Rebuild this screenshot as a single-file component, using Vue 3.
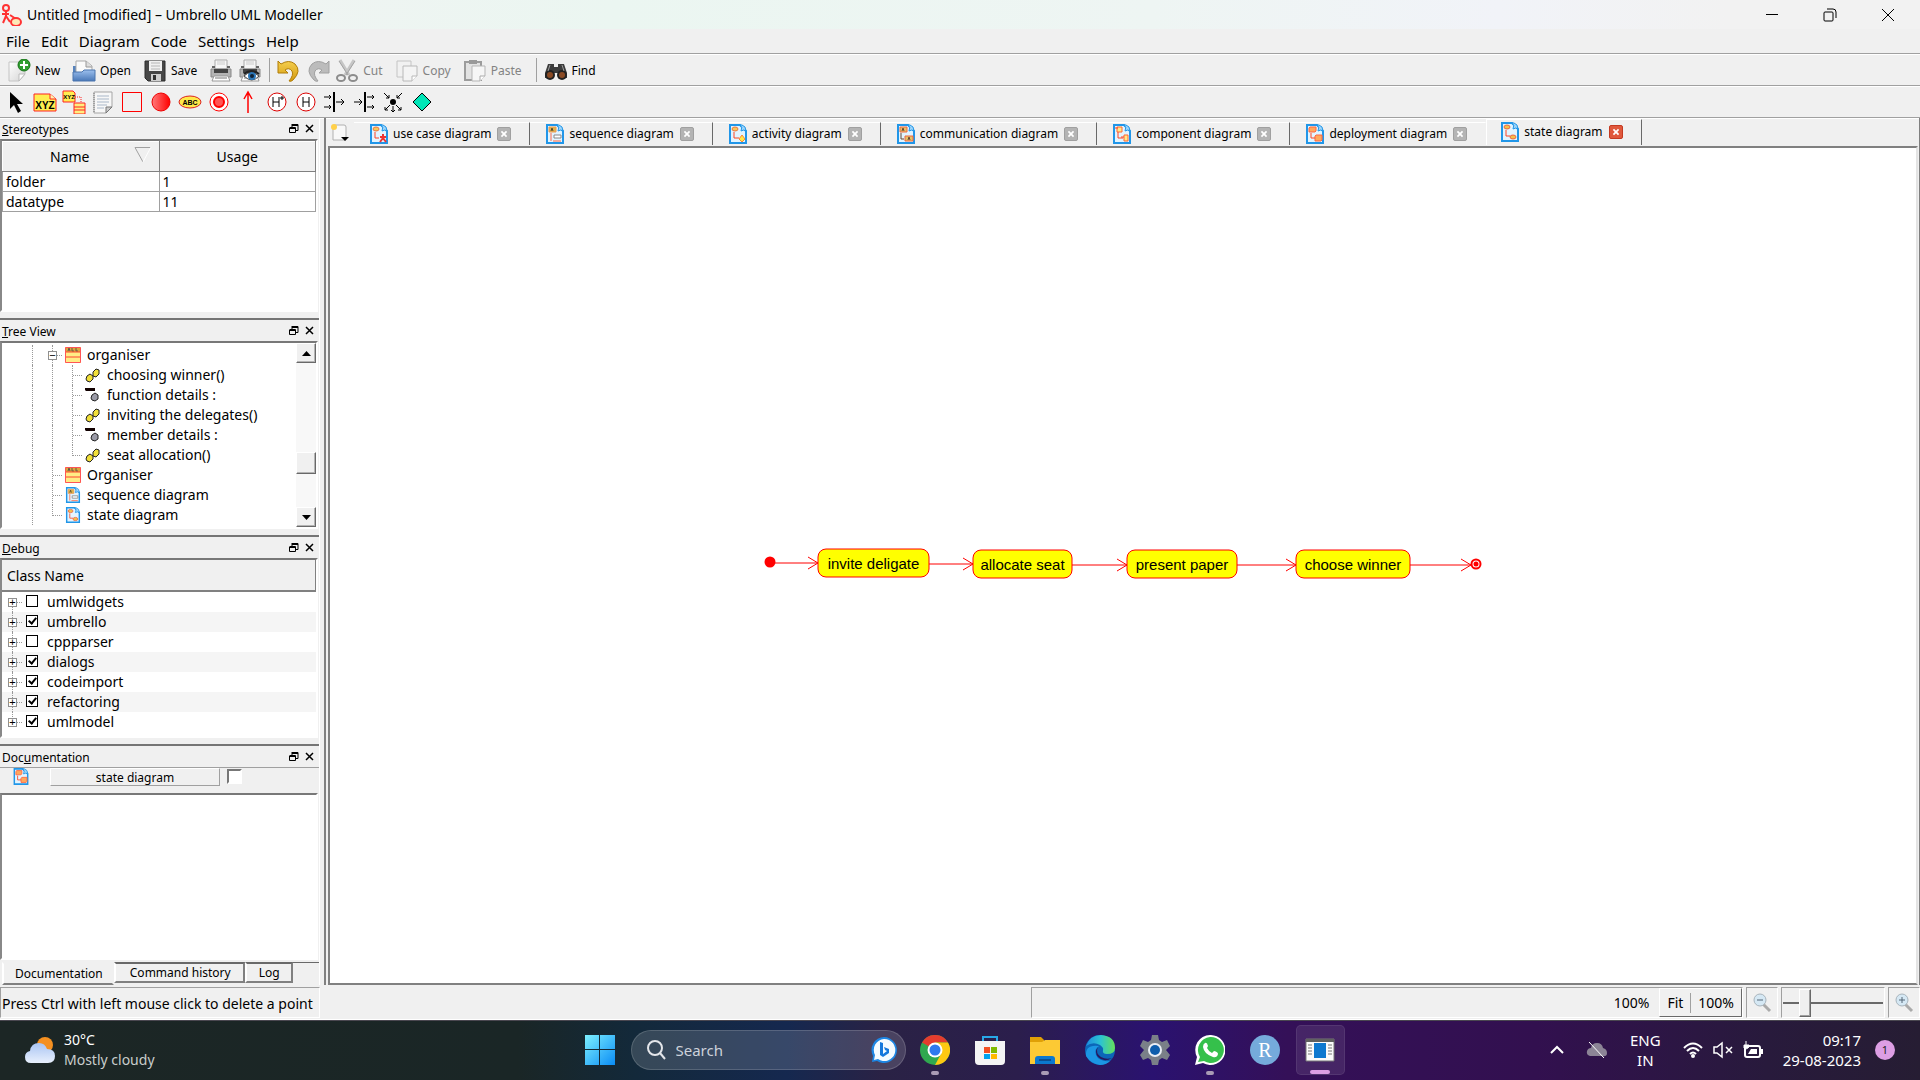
<script setup>
import { ref } from 'vue'

const menus = ['File', 'Edit', 'Diagram', 'Code', 'Settings', 'Help']

const actions = [
  { icon: 'new', label: 'New' },
  { icon: 'open', label: 'Open' },
  { icon: 'save', label: 'Save' },
  { icon: 'print', title: 'Print' },
  { icon: 'preview', title: 'Print preview' },
  { sep: true },
  { icon: 'undo', title: 'Undo' },
  { icon: 'redo', title: 'Redo', off: true },
  { icon: 'cut', label: 'Cut', off: true },
  { icon: 'copy', label: 'Copy', off: true },
  { icon: 'paste', label: 'Paste', off: true },
  { sep: true },
  { icon: 'find', label: 'Find' },
]

const tools = [
  { icon: 'select' },
  { icon: 'object', text: 'XYZ', x: 12, y: 19, size: 10 },
  { icon: 'objectnode', text: 'XYZ', x: 7, y: 9, size: 6 },
  { icon: 'note' },
  { icon: 'box' },
  { icon: 'initial' },
  { icon: 'state', text: 'ABC', x: 12, y: 15, size: 7 },
  { icon: 'final' },
  { icon: 'transition' },
  { icon: 'deephistory' },
  { icon: 'history' },
  { icon: 'join' },
  { icon: 'fork' },
  { icon: 'junction' },
  { icon: 'choice' },
]

const stereotypes = [
  { name: 'folder', usage: 1 },
  { name: 'datatype', usage: 11 },
]

const tree = [
  { level: 1, icon: 'class', text: 'organiser', open: true },
  { level: 2, icon: 'operation', text: 'choosing winner()' },
  { level: 2, icon: 'attribute', text: 'function details :' },
  { level: 2, icon: 'operation', text: 'inviting the delegates()' },
  { level: 2, icon: 'attribute', text: 'member details :' },
  { level: 2, icon: 'operation', text: 'seat allocation()', last: true },
  { level: 1, icon: 'class', text: 'Organiser' },
  { level: 1, icon: 'd-sequence', text: 'sequence diagram' },
  { level: 1, icon: 'd-state', text: 'state diagram', last: true },
]

const debugClasses = ref([
  { name: 'umlwidgets', on: false },
  { name: 'umbrello', on: true },
  { name: 'cppparser', on: false },
  { name: 'dialogs', on: true },
  { name: 'codeimport', on: true },
  { name: 'refactoring', on: true },
  { name: 'umlmodel', on: true },
])

const diagrams = [
  { icon: 'd-usecase', text: 'use case diagram' },
  { icon: 'd-sequence', text: 'sequence diagram' },
  { icon: 'd-activity', text: 'activity diagram' },
  { icon: 'd-communication', text: 'communication diagram' },
  { icon: 'd-component', text: 'component diagram' },
  { icon: 'd-deployment', text: 'deployment diagram' },
  { icon: 'd-state', text: 'state diagram' },
]
const current = ref(6)

const states = [
  { x: 488, y: 401, w: 111, text: 'invite deligate' },
  { x: 643, y: 402, w: 99, text: 'allocate seat' },
  { x: 797, y: 402, w: 110, text: 'present paper' },
  { x: 966, y: 402, w: 114, text: 'choose winner' },
]
const links = [
  { x1: 445, x2: 488, y: 415 },
  { x1: 599, x2: 643, y: 416 },
  { x1: 742, x2: 797, y: 417 },
  { x1: 907, x2: 966, y: 417 },
  { x1: 1080, x2: 1141, y: 417 },
]

const apps = [
  { icon: 'chrome', title: 'Chrome', running: true },
  { icon: 'store', title: 'Store' },
  { icon: 'explorer', title: 'File Explorer', running: true },
  { icon: 'edge', title: 'Edge' },
  { icon: 'settings', title: 'Settings' },
  { icon: 'whatsapp', title: 'WhatsApp', running: true },
  { icon: 'rstudio', title: 'R', text: 'R' },
  { icon: 'umbrello', title: 'Umbrello', active: true },
]
const zoom = ref(18)
</script>

<template>
  <svg class="defs" aria-hidden="true">
    <defs>
      <linearGradient id="g-page" x1="0" y1="0" x2="1" y2="1"><stop offset="0" stop-color="#fff" /><stop offset="1" stop-color="#d4d4d4" /></linearGradient>
      <linearGradient id="g-blue" x1="0" y1="0" x2="0" y2="1"><stop offset="0" stop-color="#9cc0ee" /><stop offset="1" stop-color="#4a78b8" /></linearGradient>
      <linearGradient id="g-gold" x1="0" y1="0" x2="0" y2="1"><stop offset="0" stop-color="#f5cf4e" /><stop offset="1" stop-color="#d39a10" /></linearGradient>
      <linearGradient id="g-win" x1="0" y1="0" x2="1" y2="1"><stop offset="0" stop-color="#7df0ff" /><stop offset="1" stop-color="#0a8cf5" /></linearGradient>
      <linearGradient id="g-edge" x1="0" y1="0" x2="1" y2="0"><stop offset="0" stop-color="#1f8ce0" /><stop offset=".5" stop-color="#2cc3d2" /><stop offset="1" stop-color="#66e05a" /></linearGradient>
      <linearGradient id="g-cloud" x1="0" y1="0" x2="0" y2="1"><stop offset="0" stop-color="#a9c4f2" /><stop offset="1" stop-color="#e8f0fd" /></linearGradient>
      <linearGradient id="g-red" x1="0" y1="0" x2="1" y2="0"><stop offset="0" stop-color="#ff7a7a" /><stop offset="1" stop-color="#f00" /></linearGradient>
    </defs>

    <symbol id="i-logo" viewBox="0 0 20 22">
      <g fill="none" stroke="#f33" stroke-width="2"><circle cx="4" cy="4" r="3" /><path d="M4 7v6M0 10h7M4 12l-3 7M4 12l4 6M8 11l6 4" /><ellipse cx="14" cy="18" rx="5" ry="4" fill="#fde9b8" /></g>
    </symbol>
    <symbol id="i-new" viewBox="0 0 24 24">
      <path d="M2 3h16v12l-6 7H2z" fill="url(#g-page)" stroke="#c4c4c4" /><path d="M18 15h-6v7z" fill="#fff" stroke="#bbb" />
      <circle cx="17" cy="6" r="6" fill="#2f9e2f" stroke="#167216" /><path d="M17 2v8M13 6h8" stroke="#fff" stroke-width="2" />
    </symbol>
    <symbol id="i-open" viewBox="0 0 24 24">
      <path d="M1 7h5v10H1z" fill="#5783bd" /><path d="M4 2h10l6 5v10H4z" fill="#fafafa" stroke="#a9a9a9" /><path d="M14 2v6h6" fill="#ddd" stroke="#999" />
      <path d="M1 13h9l2-2h11v11H1z" fill="url(#g-blue)" stroke="#4a74ad" />
    </symbol>
    <symbol id="i-save" viewBox="0 0 24 24">
      <path d="M2 2h20v20H5l-3-3z" fill="#474747" stroke="#2c2c2c" /><path d="M6 2h13v10H6z" fill="#f0f0f0" /><path d="M8 4h9M8 7h9M8 10h9" stroke="#b6b6b6" /><path d="M8 15h10v7H8z" fill="#d0d0d0" /><path d="M10 16h3v5h-3z" fill="#333" />
    </symbol>
    <symbol id="i-print" viewBox="0 0 24 24">
      <path d="M6 1h12v9H6z" fill="#f6f6f6" stroke="#aaa" /><path d="M8 3h8M8 5h8" stroke="#ccc" /><path d="M2 10h20v8H2z" fill="#b4b4b4" stroke="#888" /><path d="M5 10h14v4H5z" fill="#444" /><path d="M5 17h14l2 5H3z" fill="#fff" stroke="#999" /><path d="M3 8h3M18 8h3" stroke="#666" stroke-width="2" /><path d="M6 19h12" stroke="#777" />
    </symbol>
    <symbol id="i-preview" viewBox="0 0 24 24">
      <use href="#i-print" /><path d="M6 17q7-7 15 0-7 8-15 0z" fill="#fff" stroke="#444" /><circle cx="14" cy="17" r="4" fill="#2a76b8" /><circle cx="14" cy="17" r="2" fill="#123" /><path d="M6 15q7-6 15 0" fill="none" stroke="#222" stroke-width="2" />
    </symbol>
    <symbol id="i-undo" viewBox="0 0 24 24">
      <path d="M1 2l3 3q8-5 14 0 7 7-2 16-2 2-4 1 5-6 3-10-3-4-7-1l3 3H1z" fill="url(#g-gold)" stroke="#b07c08" />
    </symbol>
    <symbol id="i-redo" viewBox="0 0 24 24">
      <path d="M23 2l-3 3q-8-5-14 0-7 7 2 16 2 2 4 1-5-6-3-10 3-4 7-1l-3 3h10z" fill="#bcbcbc" stroke="#a0a0a0" />
    </symbol>
    <symbol id="i-cut" viewBox="0 0 24 24">
      <path d="M5 1l9 15M19 1l-9 15" stroke="#c6c6c6" stroke-width="3" /><path d="M4 2l9 14M20 2l-9 14" stroke="#a2a2a2" /><g fill="none" stroke="#8c8c8c" stroke-width="2"><ellipse cx="6" cy="19" rx="4" ry="3" /><ellipse cx="18" cy="19" rx="4" ry="3" /></g>
    </symbol>
    <symbol id="i-copy" viewBox="0 0 24 24">
      <path d="M2 2h14v16H2z" fill="#f1f1f1" stroke="#c4c4c4" /><path d="M8 7h14v10l-5 5H8z" fill="#f4f4f4" stroke="#b8b8b8" /><path d="M22 17h-5v5" fill="#fff" stroke="#b8b8b8" />
    </symbol>
    <symbol id="i-paste" viewBox="0 0 24 24">
      <path d="M2 3h16v18H2z" fill="#e2e2e2" stroke="#9c9c9c" stroke-width="2" /><path d="M6 1h8v4H6z" fill="#999" /><path d="M9 7h13v10l-5 5H9z" fill="#f6f6f6" stroke="#b5b5b5" /><path d="M22 17h-5v5" fill="#fff" stroke="#aaa" />
    </symbol>
    <symbol id="i-find" viewBox="0 0 24 24">
      <path d="M4 5h6v3h4V5h6l3 9v5h-9v-5h-4v5H1v-5z" fill="#3c3c3c" /><circle cx="6" cy="16" r="5" fill="#222" /><circle cx="18" cy="16" r="5" fill="#222" /><circle cx="6" cy="16" r="3" fill="#8a4a24" /><circle cx="18" cy="16" r="3" fill="#8a4a24" /><path d="M6 6l-2 6M18 6l2 6" stroke="#999" />
    </symbol>

    <symbol id="i-select" viewBox="0 0 24 24"><path d="M6 2v17l4-4 4 8 3-2-4-7h6z" fill="#000" /></symbol>
    <symbol id="i-object" viewBox="0 0 24 24"><path d="M1 4h16l6 5v12H1z" fill="#ffee50" stroke="#f22" /><path d="M17 4v5h6" fill="#fff5b0" stroke="#f22" /></symbol>
    <symbol id="i-objectnode" viewBox="0 0 24 24">
      <path d="M1 1h10l2 2v9H1z" fill="#ffee50" stroke="#f22" /><path d="M13 7h6v5" fill="none" stroke="#f22" stroke-dasharray="1 1" /><path d="M12 13h11v11H12zM12 17h11M12 20h11" fill="#ffee80" stroke="#f22" />
    </symbol>
    <symbol id="i-note" viewBox="0 0 24 24">
      <path d="M3 2h18v15l-6 6H3z" fill="#f7f7f7" stroke="#a5a5a5" /><path d="M6 6h12M6 9h12M6 12h12M6 15h10M6 18h7" stroke="#a9b7c8" /><path d="M21 17h-6v6z" fill="#ccc" stroke="#777" /><path d="M3 3v20" stroke="#777" stroke-dasharray="1 1" />
    </symbol>
    <symbol id="i-box" viewBox="0 0 24 24"><path d="M2.500 2.500h19v19h-19z" fill="none" stroke="#f00" /></symbol>
    <symbol id="i-initial" viewBox="0 0 24 24"><circle cx="12" cy="12" r="9" fill="url(#g-red)" stroke="#e00" /></symbol>
    <symbol id="i-state" viewBox="0 0 24 24"><ellipse cx="12" cy="12" rx="11" ry="6" fill="#ffe94a" stroke="#d22" /></symbol>
    <symbol id="i-final" viewBox="0 0 24 24"><circle cx="12" cy="12" r="9" fill="#fff" stroke="#f00" /><circle cx="12" cy="12" r="5" fill="#f55" stroke="#f00" stroke-width="2" /></symbol>
    <symbol id="i-transition" viewBox="0 0 24 24"><path d="M12 23V3M8 9l4-7 4 7" fill="none" stroke="#f00" stroke-width="1.500" /></symbol>
    <symbol id="i-history" viewBox="0 0 24 24"><circle cx="12" cy="12" r="9" fill="#fff" stroke="#d00" /><path d="M9 7v10M15 7v10M9 12h6" stroke="#000" /></symbol>
    <symbol id="i-deephistory" viewBox="0 0 24 24"><circle cx="12" cy="12" r="9" fill="#fff" stroke="#d00" /><path d="M8 7v10M14 7v10M8 12h6M17 6v4M15 8h4" stroke="#000" /></symbol>
    <symbol id="i-join" viewBox="0 0 24 24"><path d="M11 2v20" stroke="#000" stroke-width="2" /><path d="M1 7h7M6 5l2 2-2 2M1 17h7M6 15l2 2-2 2M13 12h8M18 9l3 3-3 3" fill="none" stroke="#000" /></symbol>
    <symbol id="i-fork" viewBox="0 0 24 24"><path d="M13 2v20" stroke="#000" stroke-width="2" /><path d="M15 7h7M20 5l2 2-2 2M15 17h7M20 15l2 2-2 2M2 12h8M7 9l3 3-3 3" fill="none" stroke="#000" /></symbol>
    <symbol id="i-junction" viewBox="0 0 24 24"><circle cx="12" cy="12" r="3" fill="#000" /><path d="M3 3l5 5M5 8h3V5M21 3l-5 5M19 8h-3V5M9 15l-5 5M4 17v3h3M15 15l5 5M20 17v3h-3M12 16v6M10 20l2 2 2-2" fill="none" stroke="#000" /></symbol>
    <symbol id="i-choice" viewBox="0 0 24 24"><path d="M12 3l9 9-9 9-9-9z" fill="#00e6b8" stroke="#000" /></symbol>

    <symbol id="i-class" viewBox="0 0 16 16"><path d="M0 0h16v16H0z" fill="#ffed85" /><path d="M1 1h14v4H1z" fill="#d9a83c" /><path d="M3 4l1-3 1 3M7 1v3h2M11 1v3h2" fill="none" stroke="#654" /><path d="M0 5h16M0 10h16" stroke="#f43" /><path d="M.5.5h15v15H.5z" fill="none" stroke="#f55" /></symbol>
    <symbol id="i-operation" viewBox="0 0 16 16"><g stroke="#222" fill="#f1df38"><path d="M2 9l3-2 3 2v3l-3 3-3-1-1-2z" /><path d="M8 5l3-3 3 1v4l-3 3-3-1z" /></g></symbol>
    <symbol id="i-attribute" viewBox="0 0 16 16"><path d="M0 1h10v3H1L0 3z" fill="#100" /><path d="M7 8l3-2 3 2v4l-3 2-3-1-1-2z" fill="#9a9aa6" stroke="#222" /></symbol>

    <symbol id="i-dpage" viewBox="0 0 18 20"><path d="M1 1h10l6 6v12H1z" fill="#e2f4ff" stroke="#2196e8" stroke-width="2" /><path d="M11 1q3 2 1 6 3-2 5 0l-1-4-3-2z" fill="#9fd6fb" stroke="#2196e8" /></symbol>
    <symbol id="i-d-usecase" viewBox="0 0 18 20"><use href="#i-dpage" /><ellipse cx="6" cy="5" rx="3" ry="2" fill="#f5c95a" stroke="#e74" /><path d="M5 8v6h4" fill="none" stroke="#f42" /><path d="M13 10v5M10 13h6M13 14l-3 4M13 14l3 4" stroke="#e33" stroke-width="2" /></symbol>
    <symbol id="i-d-sequence" viewBox="0 0 18 20"><use href="#i-dpage" /><path d="M3 3h7v5H3z" fill="#dcb64a" stroke="#e95" /><path d="M5 7l1-3 1 3" fill="none" stroke="#543" /><path d="M8 11h7v3H8z" fill="#fff" stroke="#888" /><path d="M5 9v8M7 17h8" stroke="#f64" /></symbol>
    <symbol id="i-d-activity" viewBox="0 0 18 20"><use href="#i-dpage" /><ellipse cx="6" cy="5" rx="3" ry="2" fill="#f5c95a" stroke="#e74" /><path d="M5 8v6h5" fill="none" stroke="#f42" /><path d="M13 11l3 4-3 3-3-3z" fill="#ffe94a" stroke="#f83" /></symbol>
    <symbol id="i-d-communication" viewBox="0 0 18 20"><use href="#i-dpage" /><path d="M3 3h7v5H3zM8 12h8v5H8z" fill="#e6c264" stroke="#e64" /><path d="M5 7l1-3 1 3M11 16l1-3 1 3M4 9v6h3" fill="none" stroke="#643" /></symbol>
    <symbol id="i-d-component" viewBox="0 0 18 20"><use href="#i-dpage" /><path d="M4 3h5v5H4zM11 11h4v6h-4z" fill="#ffe98a" stroke="#f63" /><path d="M5 8v6h5M2 4h3M8 13h3" fill="none" stroke="#f42" /></symbol>
    <symbol id="i-d-deployment" viewBox="0 0 18 20"><use href="#i-dpage" /><path d="M3 4l1-1h6v4l-1 1H3zM9 12l1-1h6v5l-1 1H9z" fill="#ffa85c" stroke="#f64" /><path d="M5 9v5h4" fill="none" stroke="#f42" /></symbol>
    <symbol id="i-d-state" viewBox="0 0 18 20"><use href="#i-dpage" /><ellipse cx="6" cy="5" rx="3" ry="2" fill="#f3c24a" stroke="#e64" /><ellipse cx="12" cy="15" rx="3" ry="2" fill="#f3c24a" stroke="#e64" /><path d="M5 8v6h4" fill="none" stroke="#f42" /></symbol>
    <symbol id="i-newtab" viewBox="0 0 20 20"><path d="M4 2h10q2 0 2 2v13H3V5z" fill="#f8f8f8" stroke="#b0b0b0" /><circle cx="4" cy="4" r="3" fill="#ffd04a" /><path d="M11 14h8l-4 4z" fill="#000" /></symbol>
    <symbol id="i-float" viewBox="0 0 10 10"><path d="M3 .5h6v6H7M3 1.500h6M3 3V0M1 3.500h5.500v5H.5V3.500M1 4.500h6" fill="none" stroke="#000" /></symbol>
    <symbol id="i-x" viewBox="0 0 10 10"><path d="M1 1l7 7M8 1l-7 7" stroke="#000" stroke-width="1.500" /></symbol>
    <symbol id="i-zoomout" viewBox="0 0 20 20"><path d="M11 11l7 7" stroke="#aaa" stroke-width="3" /><circle cx="8" cy="7" r="6" fill="#d5e8f4" stroke="#a8b4bc" /><path d="M5 7h6" stroke="#567" /></symbol>
    <symbol id="i-zoomin" viewBox="0 0 20 20"><use href="#i-zoomout" /><path d="M8 4v6" stroke="#567" /></symbol>

    <symbol id="i-weather" viewBox="0 0 32 28"><circle cx="21" cy="9" r="8" fill="#f59021" /><path d="M7 27q-6 0-6-6 0-5 5-6 1-8 9-8 6 0 8 6 8 0 8 7 0 7-7 7z" fill="url(#g-cloud)" /></symbol>
    <symbol id="i-start" viewBox="0 0 30 30"><path d="M0 0h14v14H0zM15 0h15v14H15zM0 15h14v15H0zM15 15h15v15H15z" fill="url(#g-win)" /></symbol>
    <symbol id="i-bing" viewBox="0 0 26 26"><path d="M13 0a13 13 0 1 1-7 24l-5 1 1-6A13 13 0 0 1 13 0z" fill="#1d86e4" /><path d="M13 2a11 11 0 1 1-6 20l-4 1 1-5A11 11 0 0 1 13 2z" fill="#f4fbff" /><path d="M9 5l3 1v11l4-3-2-1-1-3 5 2v4l-6 4-3-2z" fill="#1578dc" /></symbol>
    <symbol id="i-chrome" viewBox="0 0 30 30"><circle cx="15" cy="15" r="15" fill="#2fa84f" /><path d="M15 15L2 7.500A15 15 0 0 1 28 7.500H15z" fill="#e43c2e" /><path d="M28 7.500A15 15 0 0 1 15 30l7-13-7-9.500z" fill="#fdc912" /><circle cx="15" cy="15" r="7.500" fill="#fff" /><circle cx="15" cy="15" r="5.500" fill="#2f79ee" /></symbol>
    <symbol id="i-store" viewBox="0 0 30 30"><path d="M8 8V2h14v6" fill="none" stroke="#28a8e8" stroke-width="2" /><path d="M0 6h30v20q0 4-4 4H4q-4 0-4-4z" fill="#f4f4f4" /><path d="M9 12h6v6H9z" fill="#f25022" /><path d="M16 12h6v6h-6z" fill="#7fba00" /><path d="M9 19h6v5H9z" fill="#00a4ef" /><path d="M16 19h6v5h-6z" fill="#ffb900" /></symbol>
    <symbol id="i-explorer" viewBox="0 0 30 30"><path d="M0 2h11l3 3v6H0z" fill="#e0a006" /><path d="M0 7h12l3-2h15v24H0z" fill="#fcc934" /><path d="M5 29v-5q0-3 3-3h14q3 0 3 3v5z" fill="#0b78cf" /><path d="M9 25h12" stroke="#0a4f92" stroke-width="2" /></symbol>
    <symbol id="i-edge" viewBox="0 0 30 30"><circle cx="15" cy="15" r="15" fill="#0c66b8" /><path d="M1 11Q5 0 16 0q14 1 14 13 0 6-8 6-5 0-4-4 1-2-3-5-7-4-14 1z" fill="url(#g-edge)" /><path d="M14 11q-5 3-3 9 3 7 14 6-4 4-10 4-9-1-14-9Q0 9 14 11z" fill="#1c96e4" /><path d="M13 12q-3 6 3 10 5 3 11 1-8 5-14-1-4-5 0-10z" fill="#27175e" /></symbol>
    <symbol id="i-settings" viewBox="0 0 30 30"><path d="M12 0h6l1 5 3 2 5-2 3 6-4 4 4 5-3 5-5-2-3 2-1 5h-6l-1-5-3-2-5 2-3-5 4-5-4-4 3-6 5 2 3-2z" fill="#7a8088" /><circle cx="15" cy="15" r="7" fill="#e8eef4" /><circle cx="15" cy="15" r="5" fill="#0d5eac" /></symbol>
    <symbol id="i-whatsapp" viewBox="0 0 30 30"><path d="M15 0a15 15 0 1 1-7 28l-8 2 2-8A15 15 0 0 1 15 0z" fill="#fff" /><path d="M15 2a13 13 0 1 1-6 24l-6 1 2-5A13 13 0 0 1 15 2z" fill="#35c04b" /><path d="M10 8q2-1 3 3l-1 2q2 4 5 5l2-2q4 1 4 3-1 4-5 3-9-3-10-10 0-3 2-4z" fill="#fff" /></symbol>
    <symbol id="i-rstudio" viewBox="0 0 30 30"><circle cx="15" cy="15" r="15" fill="#75aadb" /></symbol>
    <symbol id="i-umbrello" viewBox="0 0 30 30"><path d="M1 4h28v22H1z" fill="#fafafa" stroke="#777" /><path d="M1 4h28v3H1z" fill="#606060" /><path d="M9 8h12v15H9z" fill="#0d78cf" /><path d="M3 10h4M3 13h4M3 16h4M3 19h4M23 10h4M23 13h4M23 16h4M23 19h4" stroke="#777" /></symbol>
    <symbol id="i-onedrive" viewBox="0 0 22 20"><path d="M4 16q-4-1-3-5 1-3 4-3 1-5 6-5t6 5q4 1 4 5t-5 3z" fill="#8c8496" /><path d="M3 2l15 16" stroke="#fff" /></symbol>
    <symbol id="i-wifi" viewBox="0 0 20 18"><g fill="none" stroke="#fff" stroke-width="2"><path d="M1 7q9-9 18 0M4 10q6-6 12 0M7 13q3-3 6 0" /></g><circle cx="10" cy="15" r="2" fill="#fff" /></symbol>
    <symbol id="i-mute" viewBox="0 0 20 18"><path d="M1 6h3l5-4v14l-5-4H1zM13 6l6 6M19 6l-6 6" fill="none" stroke="#fff" stroke-width="1.500" /></symbol>
    <symbol id="i-battery" viewBox="0 0 20 18"><rect x="2" y="5" width="15" height="11" rx="2" fill="none" stroke="#fff" stroke-width="2" /><path d="M8 8h6v5H5z" fill="#fff" /><path d="M18 8h2v5h-2z" fill="#fff" /><path d="M3 0v4M1 4h5v2q-2 3-5 1z" stroke="#fff" fill="#fff" /></symbol>
  </svg>

  <div class="screen">
    <header class="titlebar">
      <svg class="logo"><use href="#i-logo" /></svg>
      <h1>Untitled [modified] – Umbrello UML Modeller</h1>
      <div class="winbtns">
        <button type="button" aria-label="Minimise"><svg viewBox="0 0 14 14"><path d="M1 6.500h12" /></svg></button>
        <button type="button" aria-label="Restore"><svg viewBox="0 0 14 14"><rect x="1" y="4" width="9" height="9" rx="1" /><path d="M4 1h6q3 0 3 3v6" /></svg></button>
        <button type="button" aria-label="Close"><svg viewBox="0 0 14 14"><path d="M1 1l12 12M13 1L1 13" /></svg></button>
      </div>
    </header>

    <nav class="menubar">
      <button v-for="m in menus" :key="m" type="button">{{ m }}</button>
    </nav>

    <div class="toolbar actions">
      <template v-for="(a, i) in actions" :key="i">
        <span v-if="a.sep" class="sep"></span>
        <button v-else type="button" :disabled="a.off" :aria-label="a.title" :class="{ labelled: a.label }">
          <svg><use :href="'#i-' + a.icon" /></svg>{{ a.label }}
        </button>
      </template>
    </div>

    <div class="toolbar tools">
      <button v-for="t in tools" :key="t.icon" type="button" :aria-label="t.icon">
        <svg viewBox="0 0 24 24"><use :href="'#i-' + t.icon" /><text v-if="t.text" class="glyph" :x="t.x" :y="t.y" :font-size="t.size">{{ t.text }}</text></svg>
      </button>
    </div>

    <div class="workspace">
      <aside class="docks">
        <section class="dock">
          <header class="dockhead"><h2><u>S</u>tereotypes</h2>
            <button type="button" aria-label="Float"><svg><use href="#i-float" /></svg></button>
            <button type="button" aria-label="Close"><svg><use href="#i-x" /></svg></button>
          </header>
          <div class="frame stereo">
            <table>
              <thead><tr><th>Name<svg class="sort" viewBox="0 0 16 16"><path d="M8 15L0 .5h16" stroke="#a0a0a0" /><path d="M16 0L8 15" stroke="#fff" /></svg></th><th>Usage</th></tr></thead>
              <tbody><tr v-for="s in stereotypes" :key="s.name"><td>{{ s.name }}</td><td>{{ s.usage }}</td></tr></tbody>
            </table>
          </div>
        </section>
        <div class="splitter"></div>

        <section class="dock">
          <header class="dockhead"><h2><u>T</u>ree View</h2>
            <button type="button" aria-label="Float"><svg><use href="#i-float" /></svg></button>
            <button type="button" aria-label="Close"><svg><use href="#i-x" /></svg></button>
          </header>
          <div class="frame treeframe">
            <ul class="tree">
              <li v-for="n in tree" :key="n.text" :class="{ last: n.last }">
                <span class="rail"></span>
                <span class="rail" :class="{ branch: n.level === 1 }"><button v-if="n.open" type="button" class="expander" aria-label="Collapse">−</button></span>
                <span v-if="n.level === 2" class="rail branch"></span>
                <svg><use :href="'#i-' + n.icon" /></svg>{{ n.text }}
              </li>
            </ul>
            <div class="scroll">
              <button type="button" aria-label="Scroll up"><svg viewBox="0 0 9 5"><path d="M0 5l4.500-5L9 5z" /></svg></button>
              <span class="thumb"></span>
              <button type="button" aria-label="Scroll down"><svg viewBox="0 0 9 5"><path d="M0 0l4.500 5L9 0z" /></svg></button>
            </div>
          </div>
        </section>
        <div class="splitter"></div>

        <section class="dock">
          <header class="dockhead"><h2><u>D</u>ebug</h2>
            <button type="button" aria-label="Float"><svg><use href="#i-float" /></svg></button>
            <button type="button" aria-label="Close"><svg><use href="#i-x" /></svg></button>
          </header>
          <div class="frame debug">
            <div class="colhead">Class Name</div>
            <ul>
              <li v-for="c in debugClasses" :key="c.name">
                <span class="rail branch"><button type="button" class="expander" aria-label="Expand">+</button></span>
                <label><input v-model="c.on" type="checkbox">{{ c.name }}</label>
              </li>
            </ul>
          </div>
        </section>
        <div class="splitter"></div>

        <section class="dock grow">
          <header class="dockhead"><h2>Doc<u>u</u>mentation</h2>
            <button type="button" aria-label="Float"><svg><use href="#i-float" /></svg></button>
            <button type="button" aria-label="Close"><svg><use href="#i-x" /></svg></button>
          </header>
          <div class="docrow">
            <svg><use href="#i-d-deployment" /></svg>
            <span class="docname">state diagram</span>
            <input type="checkbox" aria-label="Modified">
          </div>
          <textarea class="frame doctext" aria-label="Documentation"></textarea>
          <div class="docktabs">
            <button type="button" class="on">Documentation</button>
            <button type="button">Command history</button>
            <button type="button">Log</button>
          </div>
        </section>
      </aside>

      <main class="editor">
        <div class="tabs">
          <button type="button" class="newtab" aria-label="New diagram"><svg><use href="#i-newtab" /></svg></button>
          <div v-for="(d, i) in diagrams" :key="d.text" class="tab" :class="{ on: i === current, before: i === current - 1 }">
            <button type="button" class="pick" @click="current = i"><svg><use :href="'#i-' + d.icon" /></svg>{{ d.text }}</button>
            <button type="button" class="close" aria-label="Close tab"><svg viewBox="0 0 14 14"><path d="M4 4l6 6M10 4l-6 6" stroke="#fff" stroke-width="2" /></svg></button>
          </div>
        </div>
        <div class="canvas">
          <svg class="drawing">
            <g class="wire">
              <path v-for="l in links" :key="l.x1" :d="`M${l.x1} ${l.y}H${l.x2}M${l.x2 - 10} ${l.y - 6}L${l.x2} ${l.y}L${l.x2 - 10} ${l.y + 6}`" />
            </g>
            <circle cx="440" cy="414" r="5.500" fill="#f00" />
            <g v-for="s in states" :key="s.text">
              <rect :x="s.x" :y="s.y" :width="s.w" height="28" rx="8" class="state" />
              <text :x="s.x + s.w / 2" :y="s.y + 20">{{ s.text }}</text>
            </g>
            <circle cx="1146" cy="416" r="4.500" fill="#fff" stroke="#f00" stroke-width="2" />
            <circle cx="1146" cy="416" r="2.500" fill="#f00" />
          </svg>
        </div>
      </main>
    </div>

    <footer class="status">
      <div class="cell message">Press Ctrl with left mouse click to delete a point</div>
      <div class="cell zoomcell">
        <span>100%</span>
        <div class="zoombtns"><button type="button">Fit</button><button type="button">100%</button></div>
      </div>
      <div class="cell"><button type="button" aria-label="Zoom out"><svg><use href="#i-zoomout" /></svg></button></div>
      <div class="cell"><input v-model="zoom" type="range" aria-label="Zoom"></div>
      <div class="cell"><button type="button" aria-label="Zoom in"><svg><use href="#i-zoomin" /></svg></button></div>
    </footer>

    <div class="taskbar">
      <div class="weather">
        <svg><use href="#i-weather" /></svg>
        <div>30°C<br><span>Mostly cloudy</span></div>
      </div>
      <div class="center">
        <button type="button" class="start" aria-label="Start"><svg><use href="#i-start" /></svg></button>
        <label class="search">
          <svg viewBox="0 0 20 20"><circle cx="9" cy="8" r="7" /><path d="M14 13l5 6" /></svg>
          <input type="text" placeholder="Search" aria-label="Search">
          <svg class="bing"><use href="#i-bing" /></svg>
        </label>
        <button v-for="a in apps" :key="a.icon" type="button" class="app" :class="{ running: a.running, active: a.active }" :aria-label="a.title">
          <svg viewBox="0 0 30 30"><use :href="'#i-' + a.icon" /><text v-if="a.text" x="15" y="22" class="rletter">{{ a.text }}</text></svg>
        </button>
      </div>
      <div class="tray">
        <svg class="chev" viewBox="0 0 14 10"><path d="M1 8l6-6 6 6" fill="none" stroke="#fff" stroke-width="2" /></svg>
        <svg class="drive"><use href="#i-onedrive" /></svg>
        <div class="lang">ENG<br>IN</div>
        <div class="sys"><svg><use href="#i-wifi" /></svg><svg><use href="#i-mute" /></svg><svg><use href="#i-battery" /></svg></div>
        <div class="clock">09:17<br>29-08-2023</div>
        <span class="badge">1</span>
      </div>
    </div>
  </div>
</template>

<style>
body { margin: 0; background: #f0f0f0; }
</style>

<style scoped>
* { box-sizing: border-box; }
.defs { position: absolute; width: 0; height: 0; }
.screen { display: flex; flex-direction: column; min-height: 100vh; background: #f0f0f0; color: #000; font: 14px/20px "Noto Sans", "Open Sans", sans-serif; }
button { font: inherit; color: inherit; background: none; border: 0; padding: 0; margin: 0; display: flex; align-items: center; white-space: nowrap; }
h1, h2, ul { margin: 0; padding: 0; font: inherit; list-style: none; }
svg { flex: none; display: block; overflow: visible; }
.glyph { font-family: "Liberation Sans", sans-serif; font-weight: bold; text-anchor: middle; }
.rletter { font: 20px "Liberation Serif", serif; fill: #fff; text-anchor: middle; }

.titlebar { height: 29px; display: flex; align-items: center; padding-left: 2px; gap: 5px; background: linear-gradient(90deg, #f3f3f3, #ebf6f1 32%, #eef5f3 60%, #f1f3f8 78%, #f2f2f2 90%); }
.logo { width: 20px; height: 22px; }
.winbtns { margin-left: auto; display: flex; }
.winbtns button { width: 58px; height: 29px; justify-content: center; }
.winbtns button:last-child { margin-right: 3px; }
.winbtns svg { width: 14px; height: 14px; fill: none; stroke: #000; }

.menubar { height: 25px; display: flex; gap: 11px; padding: 0 0 1px 6px; border-bottom: 1px solid #a0a0a0; font-size: 15px; }

.toolbar { height: 32px; display: flex; align-items: center; border-top: 1px solid #fff; border-bottom: 1px solid #a0a0a0; font: 12px/16px "Noto Sans", sans-serif; }
.toolbar svg { width: 24px; height: 24px; }
.actions { padding-left: 7px; gap: 5px; }
.actions button { gap: 4px; padding-top: 1px; }
.actions .labelled { margin-right: 7px; }
.actions button:disabled { color: #838383; }
.actions .sep { width: 1px; height: 24px; background: #a0a0a0; margin: 0 2px; }
.tools { gap: 5px; padding-left: 4px; }

.workspace { flex: 1; display: flex; box-shadow: inset 0 1px #fff; }
.docks { width: 320px; border-right: 1px solid #fff; display: flex; flex-direction: column; }
.grow { flex: 1; display: flex; flex-direction: column; }
.dockhead { height: 21px; display: flex; align-items: center; gap: 6px; padding: 2px 4px 0 2px; font: 12px/16px "Noto Sans", sans-serif; }
.dockhead h2 { flex: 1; }
.dockhead svg { width: 10px; height: 10px; margin-bottom: 2px; }
.frame { border: 2px solid; border-color: #787878 #fff #fff #888; background: #fff; margin-right: 1px; }
.splitter { height: 8px; border-bottom: 2px solid #757575; }

.stereo { height: 173px; }
table { width: 100%; border-collapse: collapse; table-layout: fixed; }
th { position: relative; height: 30px; padding: 1px 0 0; font-weight: normal; background: #f0f0f0; border: 1px solid #808080; border-top-color: #fff; border-left-color: #fff; }
th:first-child { border-right-color: #808080; padding-right: 22px; }
.sort { position: absolute; right: 8px; top: 5px; width: 16px; height: 16px; fill: none; }
td { height: 20px; padding: 0 3px; line-height: 19px; border: 1px solid #a0a0a0; }

.treeframe { height: 188px; display: flex; }
.tree { flex: 1; overflow: hidden; padding-top: 2px; }
.tree li { height: 20px; display: flex; align-items: center; padding-left: 20px; }
.tree svg { width: 16px; height: 16px; margin: 0 6px 0 3px; }
.rail { position: relative; width: 20px; height: 20px; }
.rail::before { content: ""; position: absolute; left: 10px; top: 0; bottom: 0; border-left: 1px dotted #999; }
.branch::after { content: ""; position: absolute; left: 11px; top: 10px; width: 9px; border-top: 1px dotted #999; }
.last .branch::before { bottom: 9px; }
.expander { position: absolute; z-index: 1; left: 6px; top: 6px; width: 9px; height: 9px; border: 1px solid #909090; background: #fff; font: 11px/7px "Liberation Sans", sans-serif; justify-content: center; }
.scroll { width: 20px; display: flex; flex-direction: column; background: #f8f8f8; }
.scroll button, .thumb { width: 20px; height: 20px; background: #f0f0f0; border: 1px solid; border-color: #fff #696969 #696969 #fff; box-shadow: inset -1px -1px #b4b4b4; justify-content: center; }
.scroll svg { width: 9px; height: 5px; }
.thumb { margin-top: auto; margin-bottom: 33px; height: 22px; }

.debug { height: 180px; }
.colhead { height: 32px; padding: 6px 5px 0; background: #f0f0f0; border-right: 1px solid #808080; border-bottom: 2px solid #808080; }
.debug li { height: 20px; display: flex; align-items: center; }
.debug li:nth-child(even) { background: #f5f5f5; }
.debug li:first-child .rail::before { top: 10px; }
.debug li:last-child .rail::before { bottom: 9px; }
.debug label { display: flex; align-items: center; gap: 9px; margin-left: 4px; }
.debug input { appearance: none; width: 12px; height: 12px; margin: 0 0 2px; border: 1px solid #000; background: #fff; outline: 0; position: relative; }
.debug input:checked::after { content: ""; position: absolute; left: 3px; top: 0; width: 3px; height: 6px; border: solid #000; border-width: 0 2px 2px 0; transform: rotate(40deg); }

.docrow { height: 26px; border-top: 1px solid #a0a0a0; display: flex; align-items: flex-start; padding-left: 13px; font: 12px/17px "Noto Sans", sans-serif; }
.docrow svg { width: 16px; height: 17px; margin-right: 21px; }
.docname { width: 170px; height: 18px; text-align: center; border: 1px solid; border-color: #fff #a0a0a0 #a0a0a0 #fff; }
.docrow input { appearance: none; width: 15px; height: 15px; margin: 1px 0 0 7px; background: #fff; border: 2px solid; border-color: #777 #fff #fff #777; }
.doctext { flex: 1; resize: none; outline: 0; display: block; width: 318px; min-height: 100px; }
.docktabs { height: 25px; display: flex; align-items: flex-start; padding-left: 2px; font: 12px/16px "Noto Sans", sans-serif; }
.docktabs button { height: 21px; margin-top: 2px; padding: 0 12px 0 14px; border: 2px solid; border-color: #696969 #808080 #808080 #fff; }
.docktabs button:last-child { padding: 0 11px 0 12px; }
.docktabs button.on { height: 23px; border-color: transparent transparent #808080 #fff; padding: 0 9px 0 11px; }
.docktabs::after { content: ""; flex: 1; margin-top: 2px; border-top: 1px solid #696969; }

.editor { flex: 1; min-width: 0; margin-left: 4px; border: solid #808080; border-width: 0 1px 0 2px; display: flex; flex-direction: column; padding: 0 1px 0 2px; }
.tabs { height: 28px; padding-bottom: 1px; display: flex; align-items: flex-end; font: 12px/16px "Noto Sans", sans-serif; }
.newtab { width: 26px; height: 24px; padding-left: 2px; }
.newtab svg { width: 20px; height: 20px; }
.tab { display: flex; align-items: center; height: 23px; padding: 0 18px 0 15px; border-top: 1px solid #fff; border-right: 1px solid #696969; }
.tab.before { border-right-color: transparent; }
.tab.on { height: 26px; padding: 0 18px 2px 13px; border-left: 1px solid #fff; }
.pick { gap: 4px; }
.pick svg { width: 20px; height: 20px; }
.close { width: 14px; height: 14px; margin-left: 6px; border-radius: 2px; background: #b4b4b4; border: 1px solid #a0a0a0; }
.close svg { width: 12px; height: 12px; }
.on .close { background: #e0583c; border-color: #c43a22; }
.canvas { flex: 1; background: #fff; border: 2px solid; border-color: #808080 #e4e4e4 #808080 #808080; }
.drawing { width: 100%; height: 500px; font: 15px "Liberation Sans", sans-serif; text-anchor: middle; }
.wire { fill: none; stroke: #f00; }
.state { fill: #ff0; stroke: #f00; }

.status { height: 35px; display: flex; gap: 3px; padding: 2px 0 1px; border-bottom: 1px solid #fff; }
.cell { display: flex; align-items: center; border: 1px solid; border-color: #a0a0a0 #fff #fff #a0a0a0; }
.message { width: 320px; padding: 2px 0 0 1px; white-space: nowrap; }
.zoomcell { margin-left: auto; width: 712px; justify-content: flex-end; gap: 10px; }
.zoombtns { display: flex; align-items: center; height: 29px; border: 1px solid; border-color: #fff #696969 #696969 #fff; }
.zoombtns button { height: 20px; padding: 0 7px; }
.zoombtns button + button { border-left: 1px solid #a0a0a0; }
.status .cell svg { width: 20px; height: 20px; margin: 0 5px; }
input[type="range"] { appearance: none; width: 100px; height: 28px; margin: 0 1px; background: linear-gradient(#696969, #696969) 0 50% / 100% 2px no-repeat; }
input[type="range"]::-webkit-slider-thumb { appearance: none; width: 12px; height: 28px; background: #f0f0f0; border: 1px solid; border-color: #fff #696969 #696969 #fff; box-shadow: inset -1px -1px #a0a0a0; }

.taskbar { height: 60px; display: grid; grid-template-columns: 1fr auto 1fr; align-items: center; box-shadow: inset 0 1px #4a4750; color: #fff; background: linear-gradient(90deg, #1c2625 0, #1a2626 27%, #13293a 33%, #15284f 41%, #2a2245 46%, #2b1e4c 53%, #2a1270 60%, #341058 67%, #32104f 80%, #281a3c 92%, #261d33 100%); }
.weather { display: flex; align-items: center; gap: 8px; padding-left: 24px; }
.weather svg { width: 32px; height: 28px; }
.weather span { color: #c9cdcc; }
.center { display: flex; align-items: center; padding-left: 12px; }
.start { width: 30px; height: 30px; margin-right: 16px; }
.start svg, .app svg { width: 30px; height: 30px; }
.search { width: 275px; height: 40px; display: flex; align-items: center; padding: 0 8px 0 14px; margin-right: 2px; border-radius: 20px; border: 1px solid rgba(255, 255, 255, .16); background: rgba(255, 255, 255, .15); }
.search svg { width: 20px; height: 20px; fill: none; stroke: #e4e6ea; stroke-width: 2; }
.search .bing { width: 26px; height: 26px; stroke: none; }
.search input { flex: 1; min-width: 0; margin-left: 10px; padding: 0; border: 0; outline: 0; background: none; color: #fff; font: 15px/20px "Noto Sans", sans-serif; }
.search input::placeholder { color: #cdd2da; opacity: 1; }
.app { position: relative; width: 49px; height: 50px; margin: 0 3px; justify-content: center; border-radius: 5px; }
.app.active { background: rgba(255, 255, 255, .09); border: 1px solid rgba(255, 255, 255, .08); }
.running::after, .active::after { content: ""; position: absolute; bottom: 0; left: 50%; width: 8px; height: 4px; margin-left: -4px; border-radius: 2px; background: #a99bb5; }
.active::after { width: 20px; margin-left: -10px; background: #dd9ee4; }
.tray { display: flex; align-items: center; justify-content: flex-end; padding-right: 25px; text-align: right; font-size: 15px; }
.chev { width: 14px; height: 10px; margin-right: 22px; }
.drive { width: 22px; height: 20px; margin-right: 22px; }
.lang { text-align: center; margin-right: 22px; }
.sys { display: flex; gap: 10px; margin-right: 20px; }
.sys svg { width: 20px; height: 18px; }
.badge { width: 20px; height: 20px; margin-left: 14px; border-radius: 50%; background: #dd9ee4; color: #222; font-size: 11px; text-align: center; }
</style>
